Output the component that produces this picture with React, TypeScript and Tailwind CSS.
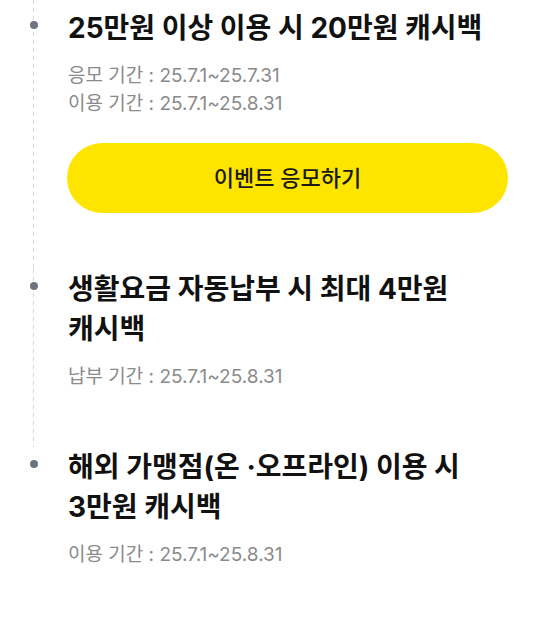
import React from 'react';

interface EventItem {
  id: string;
  title: string;
  periods: string[];
  cta?: string;
}

const events: EventItem[] = [
  {
    id: 'over-250k',
    title: '25만원 이상 이용 시 20만원 캐시백',
    periods: ['응모 기간 : 25.7.1~25.7.31', '이용 기간 : 25.7.1~25.8.31'],
    cta: '이벤트 응모하기',
  },
  {
    id: 'autopay',
    title: '생활요금 자동납부 시 최대 4만원 캐시백',
    periods: ['납부 기간 : 25.7.1~25.8.31'],
  },
  {
    id: 'overseas',
    title: '해외 가맹점(온 ·오프라인) 이용 시 3만원 캐시백',
    periods: ['이용 기간 : 25.7.1~25.8.31'],
  },
];

const TimelineItem: React.FC<{ item: EventItem; last: boolean; first: boolean }> = ({ item, last, first }) => {
  return (
    <li className={`relative flex ${first ? 'pt-[8px]' : ''} ${last ? '' : 'pb-[56px]'}`}>
      {/* dashed connector */}
      {!last && (
        <span className="absolute left-[33px] top-0 bottom-0 w-px bg-[linear-gradient(to_bottom,#d6d6d6_50%,transparent_50%)] bg-[length:1px_8px]" />
      )}
      <div className="w-[68px] shrink-0">
        <span className="relative z-10 mt-[13px] ml-[30px] block h-[8px] w-[8px] rounded-full bg-[#6b7480]" />
      </div>
      <div className="flex-1 pr-[40px]">
        <h3 className="break-keep text-[28px] font-bold leading-[40px] text-[#111111]">
          {item.title}
        </h3>
        <div className="mt-[14px]">
          {item.periods.map((p) => (
            <p key={p} className="text-[19px] leading-[28px] text-[#8a8a8a]">
              {p}
            </p>
          ))}
        </div>
        {item.cta && (
          <button
            type="button"
            className="mt-[25px] -ml-px flex h-[70px] w-full items-center justify-center rounded-full bg-[#fee500] text-[22px] font-medium text-[#191919]"
          >
            {item.cta}
          </button>
        )}
      </div>
    </li>
  );
};

export default function App() {
  return (
    <div
      className="h-[629px] w-full overflow-hidden bg-white"
      style={{ fontFamily: 'Inter, "Noto Sans CJK KR", sans-serif' }}
    >
      <ul>
        {events.map((item, i) => (
          <TimelineItem key={item.id} item={item} first={i === 0} last={i === events.length - 1} />
        ))}
      </ul>
    </div>
  );
}
